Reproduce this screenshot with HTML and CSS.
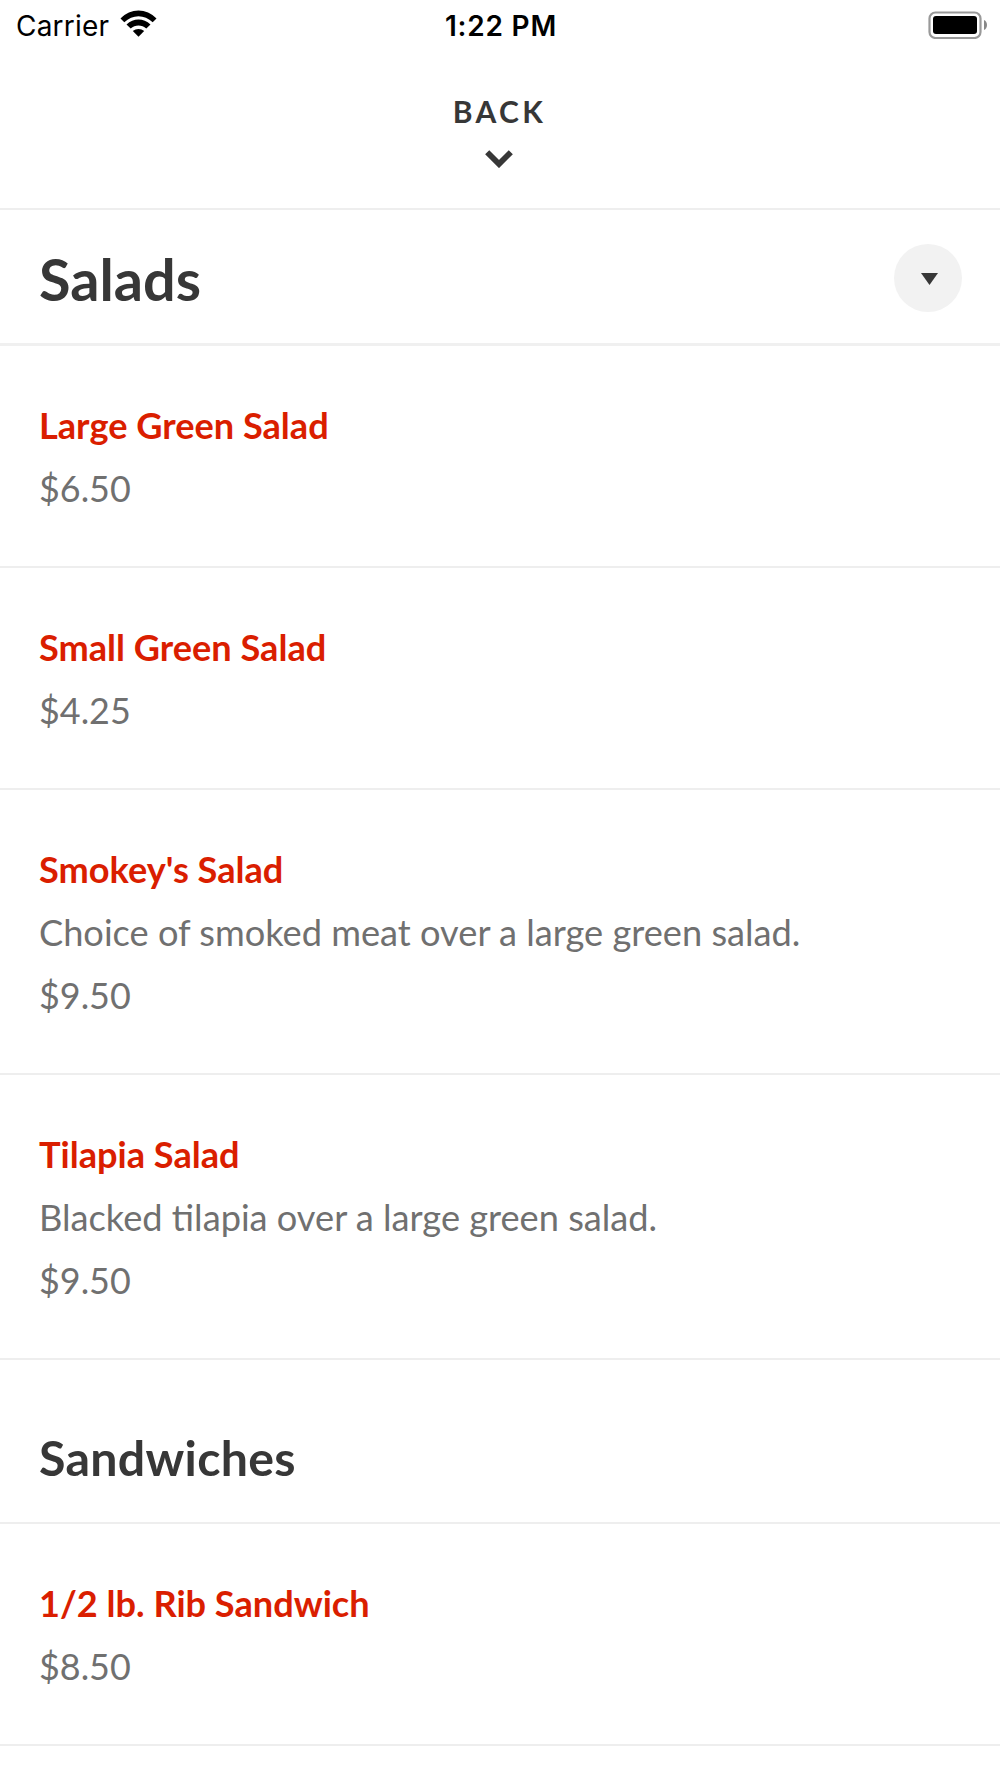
FILE: index.html
```html
<!DOCTYPE html>
<html lang="en">
<head>
    <meta charset="UTF-8">
    <meta name="viewport" content="width=device-width, initial-scale=1.0">
    <title>Menu</title>
    <link rel="stylesheet" href="styles.css">
</head>
<body>
    <div class="status-bar">
        <div class="carrier">
            <span>Carrier</span>
            <svg class="wifi" viewBox="0 0 37 27">
                <path d="M0.500 8.500C10.500-2.200 26.500-2.200 36.500 8.500L32.700 12.300C24.500 4.200 12.500 4.200 4.300 12.300z"/>
                <path d="M6.500 14.500C13.500 7.700 23.500 7.700 30.500 14.500L26.300 18.600C22 14.300 15 14.300 10.700 18.600z"/>
                <path d="M12.800 21C16 18.200 21 18.200 24.200 21L18.500 26.800z"/>
            </svg>
        </div>
        <div class="time">1:22 PM</div>
        <div class="battery">
            <svg viewBox="0 0 60 28">
                <rect x="1.500" y="1.500" width="51" height="25.500" rx="6" fill="#fff" stroke="#999" stroke-width="2.200"/>
                <rect x="5" y="5" width="44" height="18" rx="3"/>
                <path d="M56 9c4 1.800 4 8.200 0 10z" fill="#888"/>
            </svg>
        </div>
    </div>

    <a class="back" href="#">
        <span>BACK</span>
        <svg viewBox="0 0 28 18">
            <path d="M2.200 2.200L14 14L25.800 2.200" fill="none" stroke="#373737" stroke-width="5.800"/>
        </svg>
    </a>

    <div class="category">
        <h1>Salads</h1>
        <button class="dropdown" aria-label="Choose category">
            <svg viewBox="0 0 17 12"><path d="M0 0h17L8.500 12z"/></svg>
        </button>
    </div>

    <div class="item">
        <h3>Large Green Salad</h3>
        <p class="price">$6.50</p>
    </div>
    <div class="item">
        <h3>Small Green Salad</h3>
        <p class="price">$4.25</p>
    </div>
    <div class="item">
        <h3>Smokey's Salad</h3>
        <p>Choice of smoked meat over a large green salad.</p>
        <p class="price">$9.50</p>
    </div>
    <div class="item">
        <h3>Tilapia Salad</h3>
        <p>Blacked tilapia over a large green salad.</p>
        <p class="price">$9.50</p>
    </div>

    <h2 class="section-title">Sandwiches</h2>

    <div class="item">
        <h3>1/2 lb. Rib Sandwich</h3>
        <p class="price">$8.50</p>
    </div>
</body>
</html>
```
FILE: styles.css
```css
* {
    box-sizing: border-box;
}
body {
    margin: 0;
    font-family: Lato, sans-serif;
    background: #fff;
    color: #373737;
    overflow: hidden;
}
h1, h2, h3, p {
    margin: 0;
}
svg {
    display: block;
}
.status-bar {
    display: grid;
    grid-template-columns: 1fr auto 1fr;
    align-items: center;
    height: 50px;
    padding: 2px 12px 0 16px;
    font-family: Inter, sans-serif;
    font-size: 28px;
    color: #000;
}
.carrier {
    display: flex;
    align-items: center;
    gap: 11px;
    letter-spacing: 0.2px;
}
.wifi {
    width: 37px;
    height: 27px;
    margin-bottom: 5px;
}
.time {
    font-weight: 600;
    letter-spacing: 0.8px;
    margin-right: 2px;
}
.battery {
    justify-self: end;
}
.battery svg {
    width: 60px;
    height: 28px;
    margin-bottom: 3px;
}
.back {
    display: flex;
    flex-direction: column;
    align-items: center;
    height: 160px;
    padding: 43px 3px 0 0;
    border-bottom: 2px solid #eee;
    color: #373737;
    font-size: 30px;
    font-weight: 700;
    letter-spacing: 3.400px;
    line-height: 36px;
    text-decoration: none;
}
.back span {
    margin-right: -2px;
}
.back svg {
    width: 28px;
    height: 18px;
    margin-top: 21px;
}
.category {
    display: flex;
    align-items: center;
    justify-content: space-between;
    height: 136px;
    padding: 3px 38px 0 39px;
    border-bottom: 3px solid #f0f0f0;
}
.category h1 {
    font-size: 57.600px;
    font-weight: 700;
}
.dropdown {
    display: flex;
    align-items: center;
    justify-content: center;
    width: 68px;
    height: 68px;
    padding: 2px 0 0 2px;
    border: none;
    border-radius: 50%;
    background: #f2f2f2;
}
.dropdown svg {
    width: 17px;
    height: 12px;
    fill: #373737;
}
.item {
    padding: 48px 39px 46px;
    border-bottom: 2px solid #eee;
    font-size: 36.200px;
    line-height: 63px;
}
.item h3 {
    font-size: 36.150px;
    font-weight: 700;
    color: #da1e00;
}
.item p {
    color: #707070;
}
.item .price {
    font-size: 35.900px;
}
.section-title {
    height: 164px;
    padding: 68px 39px 0;
    border-bottom: 2px solid #eee;
    font-size: 48.300px;
    font-weight: 700;
    letter-spacing: 0.300px;
    line-height: 58px;
}
```
